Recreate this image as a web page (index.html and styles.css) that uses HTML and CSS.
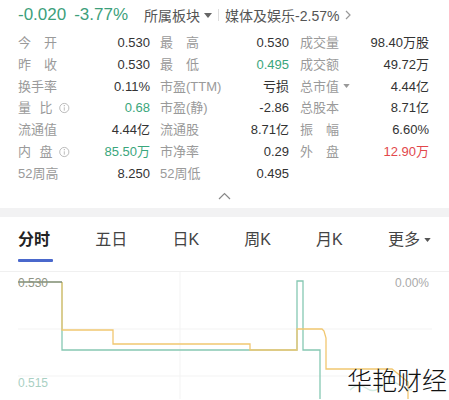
FILE: index.html
```html
<!DOCTYPE html>
<html lang="zh">
<head>
<meta charset="utf-8">
<link rel="stylesheet" href="styles.css">
</head>
<body>
<div class="page">
  <div class="topbar">
    <span class="chg">-0.020</span><span class="chg pct">-3.77%</span>
    <span class="sector">所属板块<svg class="tri" width="8" height="5" viewBox="0 0 8 5"><polygon points="0,0 8,0 4,5"/></svg></span>
    <span class="sep"></span>
    <span class="industry">媒体及娱乐-2.57%<svg class="arrow" width="6" height="10" viewBox="0 0 6 10"><polyline points="1,1 5,5 1,9"/></svg></span>
  </div>

  <div class="grid">
    <span class="lb"><span class="j"><i>今</i><i>开</i></span></span><span class="v">0.530</span>
    <span class="lb l2"><span class="j"><i>最</i><i>高</i></span></span><span class="v">0.530</span>
    <span class="lb l3">成交量</span><span class="v">98.40万股</span>

    <span class="lb"><span class="j"><i>昨</i><i>收</i></span></span><span class="v">0.530</span>
    <span class="lb l2"><span class="j"><i>最</i><i>低</i></span></span><span class="v up">0.495</span>
    <span class="lb l3">成交额</span><span class="v">49.72万</span>

    <span class="lb">换手率</span><span class="v">0.11%</span>
    <span class="lb l2">市盈(TTM)<svg class="info" width="12" height="12" viewBox="0 0 12 12"><circle cx="6" cy="6" r="5.2"/><line x1="6" y1="5.2" x2="6" y2="9"/><circle class="dot" cx="6" cy="3.4" r="0.7"/></svg></span><span class="v">亏损</span>
    <span class="lb l3">总市值<svg class="tri lt" width="7" height="4" viewBox="0 0 8 5"><polygon points="0,0 8,0 4,5"/></svg></span><span class="v">4.44亿</span>

    <span class="lb"><span class="j"><i>量</i><i>比</i></span><svg class="info" width="12" height="12" viewBox="0 0 12 12"><circle cx="6" cy="6" r="5.2"/><line x1="6" y1="5.2" x2="6" y2="9"/><circle class="dot" cx="6" cy="3.4" r="0.7"/></svg></span><span class="v up">0.68</span>
    <span class="lb l2">市盈(静)</span><span class="v">-2.86</span>
    <span class="lb l3">总股本</span><span class="v">8.71亿</span>

    <span class="lb">流通值</span><span class="v">4.44亿</span>
    <span class="lb l2">流通股</span><span class="v">8.71亿</span>
    <span class="lb l3"><span class="j"><i>振</i><i>幅</i></span></span><span class="v">6.60%</span>

    <span class="lb"><span class="j"><i>内</i><i>盘</i></span><svg class="info" width="12" height="12" viewBox="0 0 12 12"><circle cx="6" cy="6" r="5.2"/><line x1="6" y1="5.2" x2="6" y2="9"/><circle class="dot" cx="6" cy="3.4" r="0.7"/></svg></span><span class="v up">85.50万</span>
    <span class="lb l2">市净率</span><span class="v">0.29</span>
    <span class="lb l3"><span class="j"><i>外</i><i>盘</i></span></span><span class="v down">12.90万</span>

    <span class="lb">52周高</span><span class="v">8.250</span>
    <span class="lb l2">52周低</span><span class="v">0.495</span>
    <span class="lb l3"></span><span class="v"></span>
  </div>

  <div class="collapse"><svg width="13" height="8" viewBox="0 0 13 8"><polyline points="1,7 6.5,1.5 12,7"/></svg></div>
  <div class="band"></div>

  <div class="tabs">
    <span class="tab active">分时</span>
    <span class="tab">五日</span>
    <span class="tab">日K</span>
    <span class="tab">周K</span>
    <span class="tab">月K</span>
    <span class="tab">更多<svg class="tri" width="7" height="4" viewBox="0 0 8 5"><polygon points="0,0 8,0 4,5"/></svg></span>
  </div>

  <div class="chart">
    <svg class="plot" width="449" height="127" viewBox="0 0 449 127">
      <line class="gl" x1="18" y1="57" x2="432" y2="57"/>
      <line class="gl" x1="18" y1="104" x2="432" y2="104"/>
      <line class="gl" x1="180" y1="0" x2="180" y2="127"/>
      <polyline class="green" points="62,10 62,78 297,78 297,9 303,9 303,78 320,78 320,127"/>
      <polyline class="yellow" points="62,10 62,58 113,58 113,72 250,72 250,78 297,78 297,57 322,57 324,59 326,66 326,97 350,97 392,97 408,110 408,127"/>
      <polyline class="top" points="18,10 62,10"/>
      <path class="wave" d="M350,118 Q358,110 366,116 T382,114 T398,112 T412,118"/>
    </svg>
    <span class="ax ax-top">0.530</span>
    <span class="ax ax-pct">0.00%</span>
    <span class="ax ax-low">0.515</span>
    <span class="watermark">华艳财经</span>
  </div>
</div>
</body>
</html>
```

FILE: styles.css
```css
* { box-sizing: border-box; margin: 0; padding: 0; }
html, body { background: #ffffff; }
body {
  width: 449px;
  height: 400px;
  overflow: hidden;
  font-family: "Liberation Sans", "Noto Sans CJK SC", sans-serif;
  color: #333333;
}
.page { width: 449px; }

.topbar {
  height: 30px;
  display: flex;
  align-items: center;
  padding-left: 18px;
  white-space: nowrap;
}
.chg { font-size: 17px; color: #3d9f7b; }
.pct { margin-left: 8px; }
.sector {
  margin-left: 16px;
  font-size: 14px;
  color: #555555;
  display: inline-flex;
  align-items: center;
}
.tri { fill: #666666; margin-left: 4px; }
.tri.lt { fill: #999999; }
.sep {
  width: 1px;
  height: 12px;
  background: #dddddd;
  margin: 0 6px 0 6px;
}
.industry {
  font-size: 14px;
  color: #555555;
  display: inline-flex;
  align-items: center;
}
.arrow { fill: none; stroke: #999999; stroke-width: 1.2; margin-left: 6px; }

.grid {
  display: grid;
  grid-template-columns: 52px 80px 70px 69px 71px 69px;
  grid-auto-rows: 21.8px;
  padding-left: 18px;
  margin-top: 2px;
  font-size: 13px;
  line-height: 21.8px;
}
.lb {
  color: #9a9a9a;
  display: flex;
  align-items: center;
  white-space: nowrap;
}
.l2 { padding-left: 10px; }
.l3 { padding-left: 11px; }
.j {
  width: 39px;
  display: inline-flex;
  justify-content: space-between;
}
.j i { font-style: normal; }
.v { text-align: right; color: #333333; white-space: nowrap; }
.v.up { color: #3aa67c; }
.v.down { color: #e2474b; }
.info { margin-left: 7px; fill: none; stroke: #aaaaaa; stroke-width: 0.9; }
.info .dot { fill: #aaaaaa; stroke: none; }

.collapse {
  height: 23px;
  display: flex;
  justify-content: center;
  align-items: center;
}
.collapse svg { fill: none; stroke: #888888; stroke-width: 1.2; }
.band { height: 9px; background: #f2f2f3; }

.tabs {
  display: flex;
  justify-content: space-between;
  padding: 0 18px 0 18px;
  height: 55px;
  border-bottom: 1px solid #f0f0f0;
}
.tab {
  font-size: 16px;
  line-height: 22px;
  padding-top: 12px;
  color: #444444;
  display: inline-flex;
  align-items: flex-start;
  position: relative;
}
.tab .tri { margin-top: 9px; margin-left: 4px; fill: #555555; }
.tab.active { font-weight: bold; color: #222222; }
.tab.active::after {
  content: "";
  position: absolute;
  left: 0;
  top: 42px;
  width: 35px;
  height: 3px;
  background: #4a68cc;
  border-radius: 1px;
}

.chart { position: relative; height: 127px; }
.plot { display: block; }
.gl { stroke: #f3f3f3; stroke-width: 1; }
.green { fill: none; stroke: #86c8b3; stroke-width: 1.3; }
.yellow { fill: none; stroke: #f1c770; stroke-width: 1.3; }
.top { fill: none; stroke: #7e8c70; stroke-width: 1.3; }
.wave { fill: none; stroke: #d3eae2; stroke-width: 1.5; }
.ax { position: absolute; font-size: 12px; line-height: 14px; }
.ax-top { left: 18px; top: 4px; color: #8f9484; }
.ax-pct { left: 395px; top: 4px; color: #aaaaaa; }
.ax-low { left: 18px; top: 104px; color: #a9d0c3; }
.watermark {
  position: absolute;
  left: 347px;
  top: 90px;
  font-family: "Noto Sans CJK SC", sans-serif;
  font-weight: 300;
  font-size: 25px;
  line-height: 34px;
  color: #111111;
}
```
